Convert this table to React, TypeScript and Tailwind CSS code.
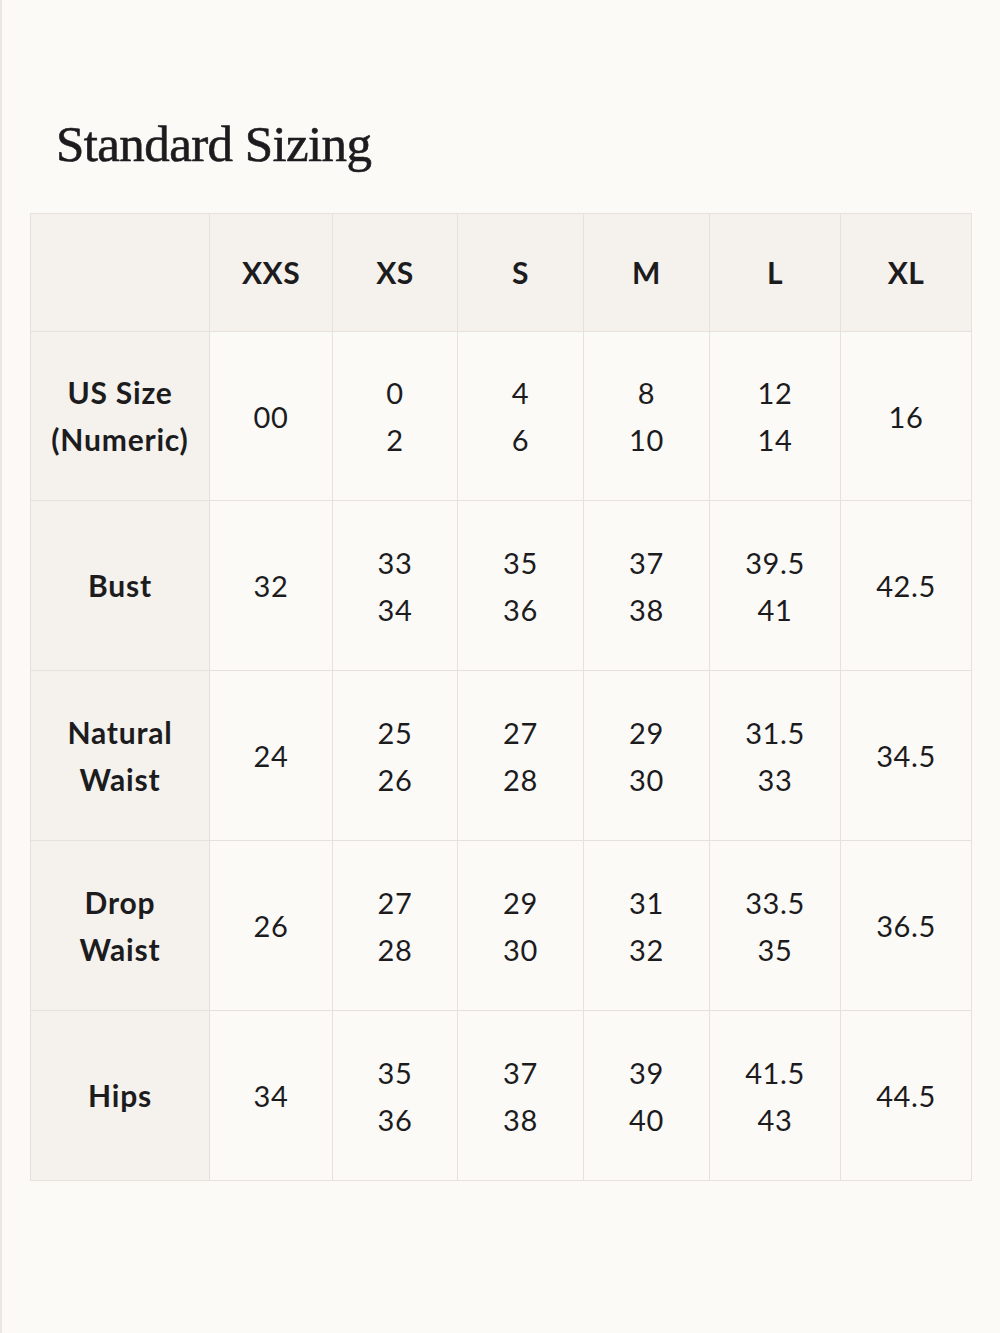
import React from 'react'

// Standard size chart: header row of letter sizes, first column of measures.
const sizes = ['XXS', 'XS', 'S', 'M', 'L', 'XL']

const rows: { label: string[]; cells: string[][] }[] = [
  { label: ['US Size', '(Numeric)'], cells: [['00'], ['0', '2'], ['4', '6'], ['8', '10'], ['12', '14'], ['16']] },
  { label: ['Bust'], cells: [['32'], ['33', '34'], ['35', '36'], ['37', '38'], ['39.5', '41'], ['42.5']] },
  { label: ['Natural', 'Waist'], cells: [['24'], ['25', '26'], ['27', '28'], ['29', '30'], ['31.5', '33'], ['34.5']] },
  { label: ['Drop', 'Waist'], cells: [['26'], ['27', '28'], ['29', '30'], ['31', '32'], ['33.5', '35'], ['36.5']] },
  { label: ['Hips'], cells: [['34'], ['35', '36'], ['37', '38'], ['39', '40'], ['41.5', '43'], ['44.5']] },
]

const cell = 'flex flex-col items-center justify-center border-r border-b border-[#e6e1db] text-center'

export default function App() {
  return (
    <div
      className="min-h-[1333px] w-[1000px] bg-[#fcfaf7] text-[#1c1c1e] border-l-2 border-[#ebe7e2]"
      style={{ fontFamily: 'Lato, "Noto Sans", sans-serif' }}
    >
      <h1
        className="pt-[112px] pl-[54px] text-[51px] leading-[64px] tracking-[-0.6px] [-webkit-text-stroke:0.6px_#1c1c1e]"
        style={{ fontFamily: '"Liberation Serif", "DejaVu Serif", serif' }}
      >
        Standard Sizing
      </h1>
      <div className="ml-[28px] mt-[37px] grid w-[942px] grid-cols-[179px_123px_125px_126px_126px_131px_131px] grid-rows-[118px_169px_170px_170px_170px_170px] border-l border-t border-[#e6e1db]">
        <div className={`${cell} bg-[#f5f1ec]`} />
        {sizes.map((s) => (
          <div key={s} className={`${cell} bg-[#f5f1ec] text-[30px] font-bold tracking-[0.5px]`}>
            {s}
          </div>
        ))}
        {rows.map((r) => (
          <React.Fragment key={r.label.join(' ')}>
            <div className={`${cell} bg-[#f5f1ec] text-[30px] font-bold leading-[47px] tracking-[0.8px]`}>
              {r.label.map((l) => (
                <span key={l}>{l}</span>
              ))}
            </div>
            {r.cells.map((c, i) => (
              <div key={i} className={`${cell} text-[29px] leading-[47px] tracking-[0.6px]`}>
                {c.map((v) => (
                  <span key={v}>{v}</span>
                ))}
              </div>
            ))}
          </React.Fragment>
        ))}
      </div>
    </div>
  )
}
